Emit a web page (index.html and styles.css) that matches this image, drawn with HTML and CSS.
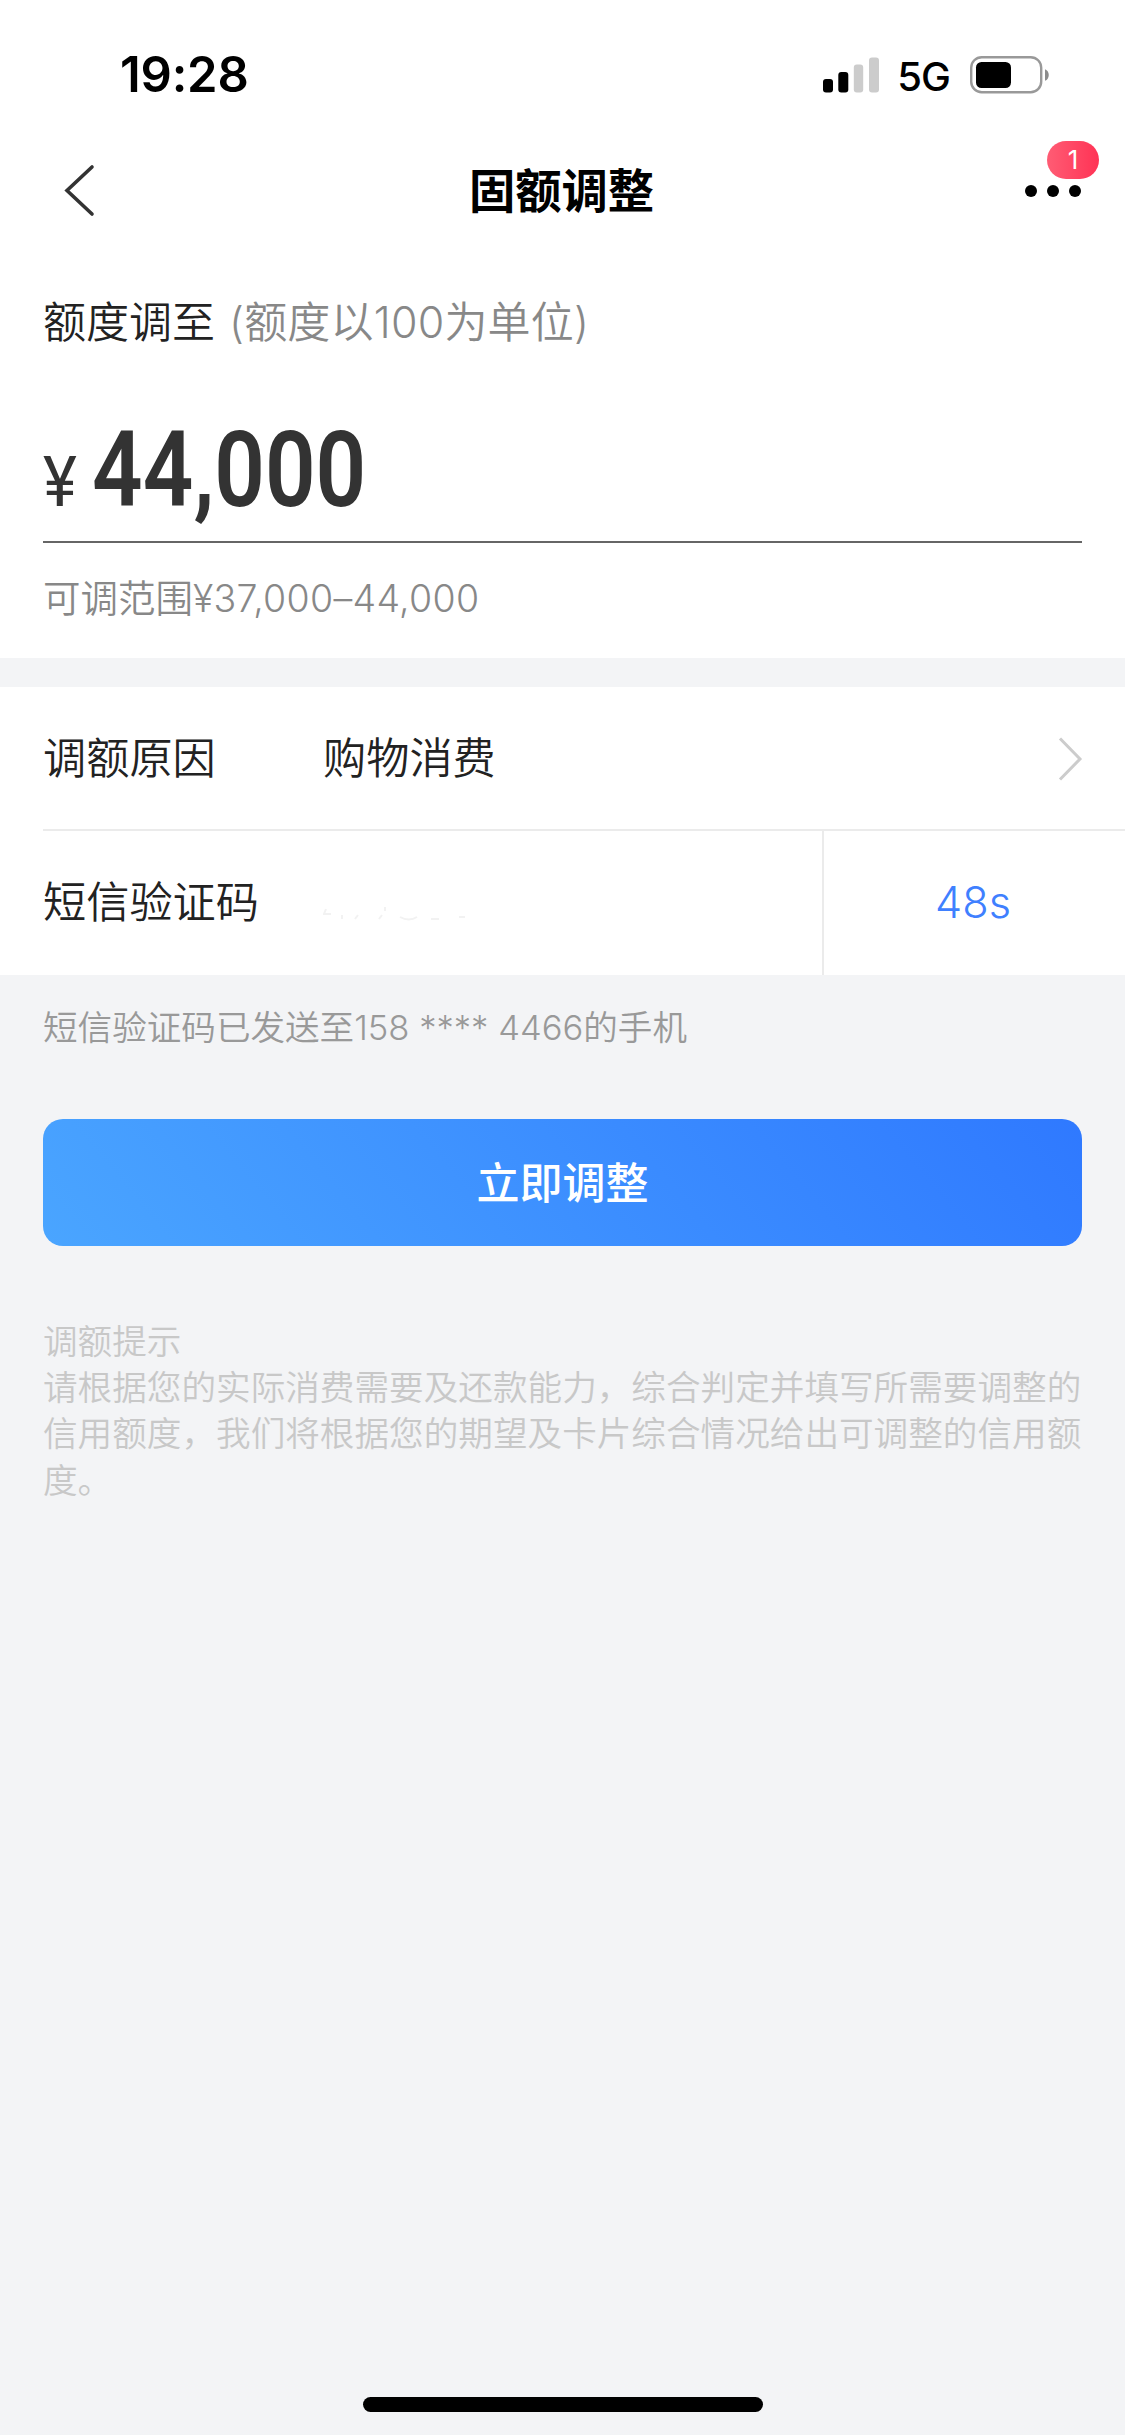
FILE: index.html
```html
<!DOCTYPE html>
<html lang="zh-CN">
<head>
    <meta charset="UTF-8">
    <meta name="viewport" content="width=device-width, initial-scale=1.0">
    <title>固额调整</title>
    <link rel="stylesheet" href="styles.css">
</head>
<body>
    <div class="page">
        <div class="status-bar">
            <span class="time">19:28</span>
            <div class="status-icons">
                <svg class="signal" width="56" height="36" viewBox="0 0 56 36">
                    <rect x="0" y="22" width="10" height="13.5" rx="3" fill="#000"/>
                    <rect x="15.3" y="15" width="10" height="20.5" rx="3" fill="#000"/>
                    <rect x="30.8" y="7.5" width="9.4" height="28" rx="3" fill="#ccc"/>
                    <rect x="46" y="0.5" width="10" height="35" rx="3" fill="#ccc"/>
                </svg>
                <span class="network">5G</span>
                <svg class="battery" width="80" height="38" viewBox="0 0 80 38">
                    <rect x="1.2" y="1.2" width="70" height="35" rx="10.5" fill="none" stroke="#999" stroke-width="2.4"/>
                    <rect x="6" y="6" width="35" height="26" rx="5.5" fill="#000"/>
                    <path d="M75 13.2c5 1.8 5 9.8 0 11.6z" fill="#8c8c8c"/>
                </svg>
            </div>
        </div>

        <div class="nav-bar">
            <svg class="back" width="34" height="54" viewBox="0 0 34 54">
                <path d="M30 3L5 26.5L30 50" fill="none" stroke="#333" stroke-width="3.6" stroke-linecap="round"/>
            </svg>
            <h1>固额调整</h1>
            <div class="more">
                <span class="dot"></span>
                <span class="dot"></span>
                <span class="dot"></span>
                <span class="badge">1</span>
            </div>
        </div>

        <div class="amount-card">
            <div class="amount-label">额度调至<span class="unit">(额度以100为单位)</span></div>
            <div class="amount">
                <span class="currency">¥</span>
                <span class="number">44,000</span>
            </div>
            <div class="range">可调范围<span class="figures">¥37,000–44,000</span></div>
        </div>

        <div class="form-card">
            <div class="form-row">
                <span class="label">调额原因</span>
                <span class="value">购物消费</span>
                <svg class="arrow" width="26" height="46" viewBox="0 0 26 46">
                    <path d="M3 3.5L23 24L3 44.5" fill="none" stroke="#ccc" stroke-width="3"/>
                </svg>
            </div>
            <div class="form-row code-row">
                <span class="label">短信验证码</span>
                <span class="code-value">
                    <svg width="150" height="18" viewBox="0 0 150 18" fill="none" stroke="#f2f2f2" stroke-width="2">
                        <path d="M3 6L1 11H8M19 12V16M35 12L32 16M62 4V8M59 12L56 16M77 14Q86 19 94 14M108 16H116M136 14H142"/>
                    </svg>
                </span>
                <span class="countdown">48s</span>
            </div>
        </div>

        <p class="sent-tip">短信验证码已发送至<span class="phone">158 **** 4466</span>的手机</p>

        <button class="submit" type="button">立即调整</button>

        <div class="notice">
            <p>调额提示</p>
            <p>请根据您的实际消费需要及还款能力，综合判定并填写所需要调整的信用额度，我们将根据您的期望及卡片综合情况给出可调整的信用额度。</p>
        </div>

        <div class="home-indicator"></div>
    </div>
</body>
</html>
```

FILE: styles.css
```css
/* Global Styles */
* {
    box-sizing: border-box;
}
body {
    margin: 0;
    background-color: #f3f4f6;
    font-family: Inter, "Noto Sans CJK SC", sans-serif;
    font-weight: 350;
    color: #222;
}
h1, p {
    margin: 0;
}
svg {
    display: block;
}
.page {
    display: flex;
    flex-direction: column;
    width: 1125px;
    height: 2435px;
}

/* Status Bar */
.status-bar {
    display: flex;
    justify-content: space-between;
    align-items: center;
    height: 132px;
    padding: 17px 75px 0 120px;
    background-color: #fff;
    color: #000;
}
.time {
    font-size: 49px;
    font-weight: 600;
    letter-spacing: -0.2px;
}
.status-icons {
    display: flex;
    align-items: center;
}
.network {
    margin: 4px 20px 0 18px;
    font-size: 40px;
    font-weight: 500;
    line-height: 1;
    letter-spacing: -1px;
}

/* Nav Bar */
.nav-bar {
    display: flex;
    justify-content: space-between;
    align-items: center;
    height: 117px;
    padding: 0 44px 0 62px;
    background-color: #fff;
}
.nav-bar h1 {
    margin-left: 2px;
    font-size: 46.3px;
    font-weight: 600;
    line-height: 60px;
    color: #000;
}
.more {
    position: relative;
    display: flex;
    gap: 10px;
}
.dot {
    width: 12px;
    height: 12px;
    border-radius: 50%;
    background-color: #000;
}
.badge {
    position: absolute;
    top: -44px;
    left: 22px;
    width: 52px;
    height: 38px;
    border-radius: 19px;
    background: linear-gradient(90deg, #ff5c74, #ff3355);
    color: #fff;
    font-size: 26px;
    font-weight: 400;
    line-height: 38px;
    text-align: center;
}

/* Amount Card */
.amount-card {
    height: 409px;
    padding: 43px 43px 0;
    background-color: #fff;
}
.amount-label {
    font-size: 43px;
    line-height: 60px;
}
.unit {
    margin-left: 14px;
    color: #888;
    letter-spacing: 0.2px;
}
.amount {
    display: flex;
    align-items: baseline;
    height: 191px;
    padding-top: 57px;
    border-bottom: 2px solid #666;
    font-family: Roboto, sans-serif;
    color: #333;
}
.currency {
    width: 49px;
    font-size: 70px;
    font-weight: 400;
    transform: scaleX(0.92);
    transform-origin: left;
}
.number {
    font-size: 105px;
    font-weight: 600;
    line-height: 123px;
    transform: scaleX(0.845);
    transform-origin: left;
}
.range {
    padding-top: 30px;
    font-size: 37.5px;
    line-height: 52px;
    color: #888;
}
.figures {
    letter-spacing: 0.3px;
}

/* Form Card */
.form-card {
    margin-top: 29px;
    padding-left: 43px;
    background-color: #fff;
}
.form-row {
    display: flex;
    align-items: center;
    height: 144px;
    padding-right: 42px;
    border-bottom: 2px solid #ebebeb;
    font-size: 43.2px;
    line-height: 142px;
}
.label {
    width: 280px;
}
.arrow {
    margin-left: auto;
}
.code-row {
    align-items: stretch;
    padding-right: 0;
    border-bottom: none;
    line-height: 143px;
}
.code-value {
    flex: 1;
    padding-top: 72px;
}
.countdown {
    width: 303px;
    padding-right: 3px;
    border-left: 2px solid #ebebeb;
    color: #3f80ff;
    text-align: center;
}

/* Tip under the form */
.sent-tip {
    padding: 27px 43px 0;
    font-size: 34.6px;
    line-height: 50px;
    color: #999;
}

/* Submit Button */
.submit {
    height: 127px;
    margin: 67px 43px 0;
    padding: 0 0 5px;
    border: none;
    border-radius: 20px;
    background: linear-gradient(50deg, #4aa5ff, #2f79ff);
    color: #fff;
    font-family: inherit;
    font-size: 43px;
    font-weight: 500;
}

/* Notice */
.notice {
    padding: 72px 43px 0;
    font-size: 34.62px;
    line-height: 46.2px;
    color: #c8c8c8;
}

.home-indicator {
    width: 400px;
    height: 15px;
    margin: auto auto 23px;
    border-radius: 8px;
    background-color: #000;
}
```
